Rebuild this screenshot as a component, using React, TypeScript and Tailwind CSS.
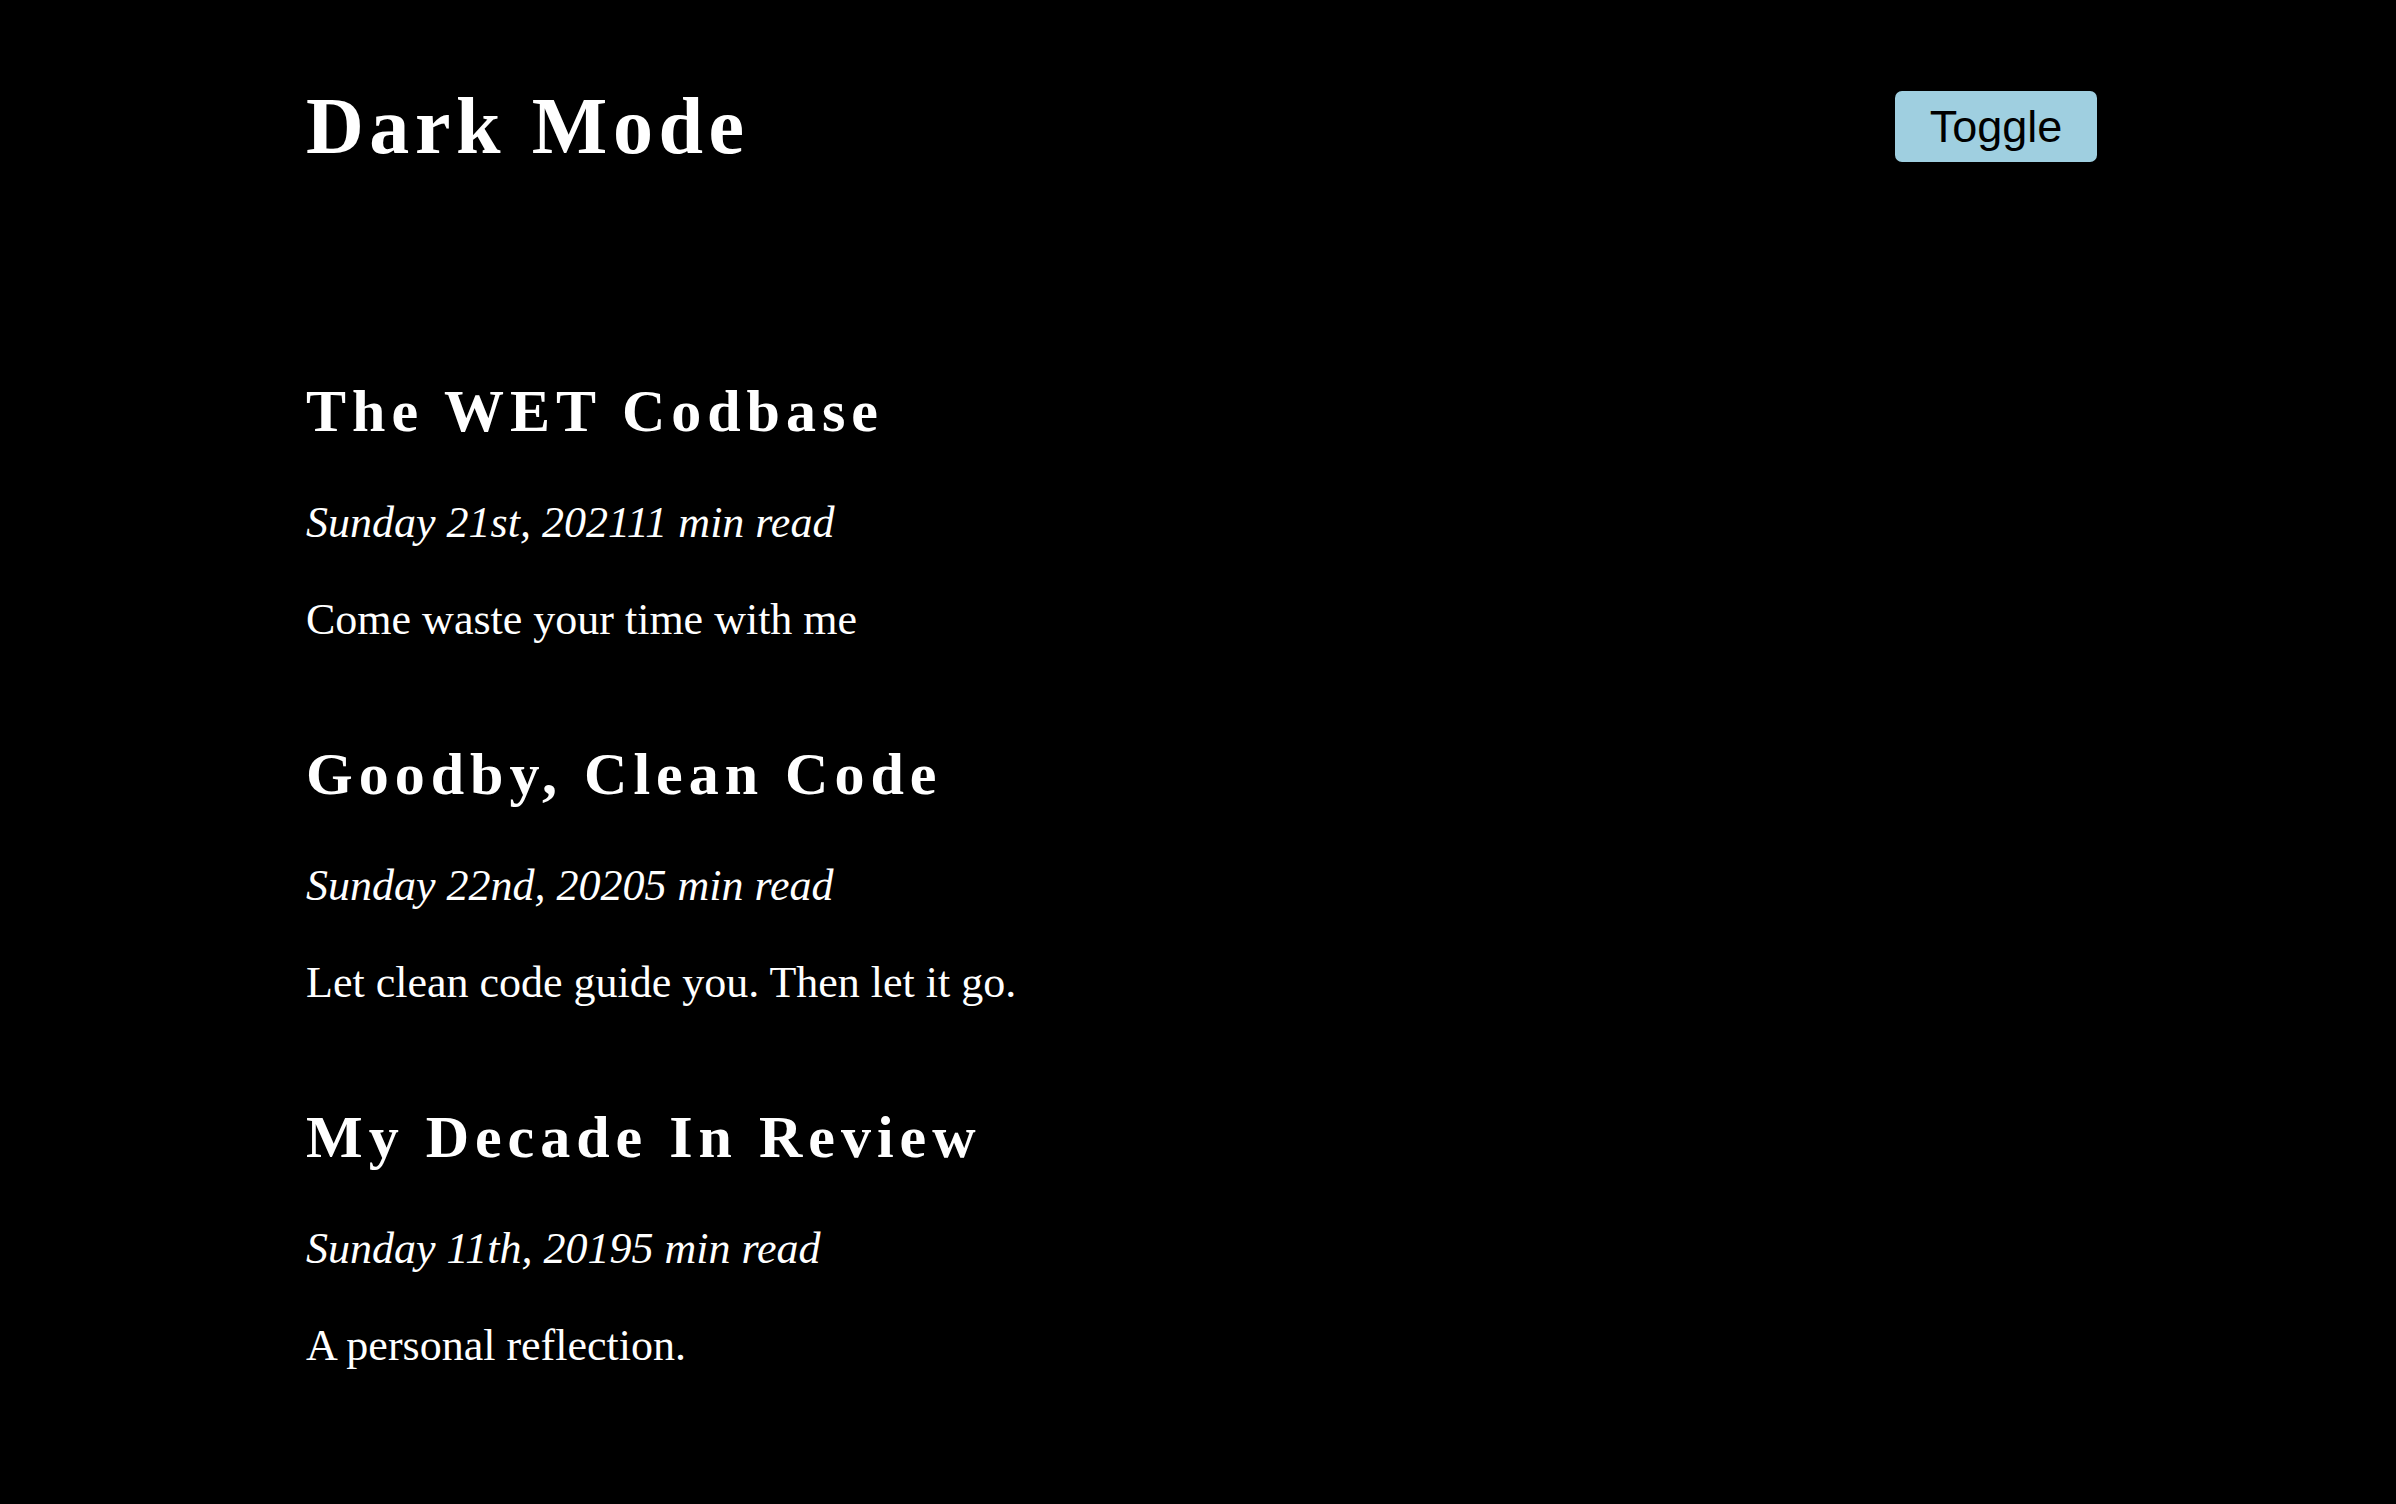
const posts = [
  {
    title: "The WET Codbase",
    date: "Sunday 21st, 2021",
    readTime: "11 min read",
    excerpt: "Come waste your time with me",
  },
  {
    title: "Goodby, Clean Code",
    date: "Sunday 22nd, 2020",
    readTime: "5 min read",
    excerpt: "Let clean code guide you. Then let it go.",
  },
  {
    title: "My Decade In Review",
    date: "Sunday 11th, 2019",
    readTime: "5 min read",
    excerpt: "A personal reflection.",
  },
];

function Header() {
  return (
    <header className="flex items-center justify-between pt-[80px]">
      <h1 className="text-[80px] leading-[92px] font-bold tracking-[0.07em]">
        Dark Mode
      </h1>
      <button className="h-[71px] w-[202px] rounded-[7px] bg-[#9fcfe0] text-[45px] leading-none text-black font-['Liberation_Sans',Arial,sans-serif]">
        Toggle
      </button>
    </header>
  );
}

function PostItem({ post }: { post: (typeof posts)[number] }) {
  return (
    <article className="flex flex-col">
      <h2 className="mb-[52px] text-[60px] leading-[70px] font-bold tracking-[0.1em]">
        {post.title}
      </h2>
      <p className="mb-[47px] text-[44px] leading-[50px] italic">
        {post.date}
        {post.readTime}
      </p>
      <p className="text-[44px] leading-[50px]">{post.excerpt}</p>
    </article>
  );
}

export default function App() {
  return (
    <div className="min-h-screen bg-black text-white font-['Liberation_Serif','Times_New_Roman',serif]">
      <div className="pl-[306px] pr-[299px] pb-[100px]">
        <Header />
        <main className="mt-[204px] flex flex-col gap-[94px]">
          {posts.map((post) => (
            <PostItem key={post.title} post={post} />
          ))}
        </main>
      </div>
    </div>
  );
}
